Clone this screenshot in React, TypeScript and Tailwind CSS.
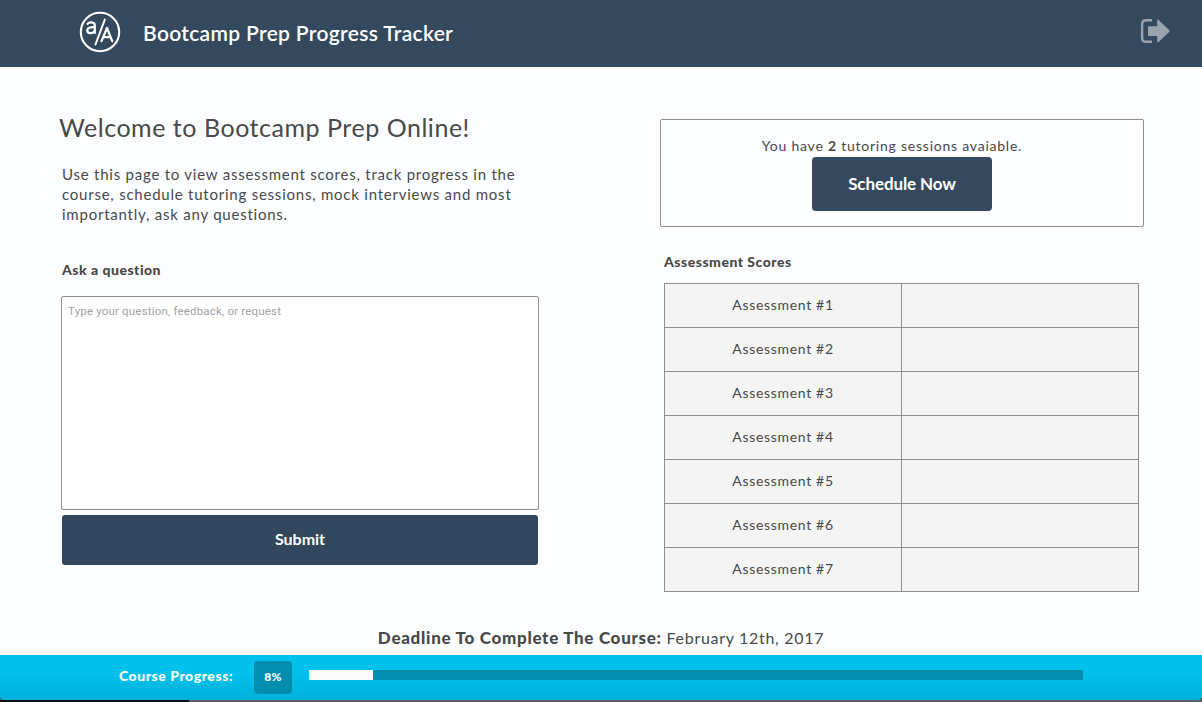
const assessments = [1, 2, 3, 4, 5, 6, 7];
const progress = 8.3;

function Logo() {
  return (
    <svg width="42" height="42" viewBox="0 0 42 42" fill="none" stroke="#fff" strokeLinecap="round" strokeLinejoin="round">
      <circle cx="21" cy="21" r="19.2" strokeWidth="2.1" />
      <path d="M25.8 8.6 L16.4 33.6" strokeWidth="1.9" />
      <path d="M8.6 12.9 C10.2 10.8 15.8 10.4 15.8 14.6 V22 M15.8 16.2 C11 16 8.3 17 8.3 19.4 C8.3 23 14.2 22.9 15.8 19.8" strokeWidth="2.2" />
      <path d="M22.5 30.2 L28 17 L33.2 30.2 M24.5 26.2 H31.4" strokeWidth="2.2" />
    </svg>
  );
}

function SignOutIcon() {
  return (
    <svg width="30" height="26" viewBox="0 0 30 26">
      <path d="M12 2.2 H6 Q2.1 2.2 2.1 6 V20 Q2.1 23.8 6 23.8 H12" fill="none" stroke="#99a4af" strokeWidth="2.4" />
      <path d="M8.8 8.2 H17.2 V2 Q17.6 1 18.6 1.9 L29.4 12.2 Q30 13 29.4 13.8 L18.6 24 Q17.6 24.9 17.2 24 V17.9 H8.8 Q8 17.9 8 17.1 V9 Q8 8.2 8.8 8.2 Z" fill="#99a4af" />
    </svg>
  );
}

export default function App() {
  return (
    <div className="flex h-[702px] w-[1202px] flex-col overflow-hidden bg-[#5a605d] font-['Lato',sans-serif] text-[#494949]">
      <header className="flex h-[67px] shrink-0 items-start border-b border-[#30455b] bg-[#35495e] pr-[32px] pl-[79px]">
        <div className="mt-[11px]"><Logo /></div>
        <h1 className="mt-[18px] ml-[22px] text-[21px] leading-[30px] font-semibold tracking-[0.32px] whitespace-nowrap text-white">
          Bootcamp Prep Progress Tracker
        </h1>
        <button className="mt-[18px] ml-auto" aria-label="Sign out"><SignOutIcon /></button>
      </header>

      <main className="flex h-[558px] shrink-0 justify-between bg-[#fcfdff] pr-[58px] pl-[61px]">
        <section className="w-[478px]">
          <h2 className="mt-[42px] -ml-0.5 text-[25px] leading-9 tracking-[0.53px] whitespace-nowrap">Welcome to Bootcamp Prep Online!</h2>
          <p className="mt-[19px] ml-px text-[15px] leading-5 tracking-[0.77px] whitespace-nowrap">
            Use this page to view assessment scores, track progress in the<br />
            course, schedule tutoring sessions, mock interviews and most<br />
            importantly, ask any questions.
          </p>
          <h3 className="mt-[36px] ml-px text-[14px] leading-5 font-black tracking-[0.5px]">Ask a question</h3>
          <textarea
            className="mt-[16px] block h-[214px] w-[478px] resize-none rounded-[2px] border border-[#8f8f8f] bg-white px-1.5 py-[6px] font-['Roboto',sans-serif] text-[11.5px] leading-4 tracking-[0.18px] placeholder:text-[#a2a2a2]"
            placeholder="Type your question, feedback, or request"
          />
          <button className="mt-[5px] ml-px block h-[50px] w-[476px] rounded-[3px] bg-[#30475e] pb-0.5 text-[16px] font-bold text-white">Submit</button>
        </section>

        <section className="w-[484px]">
          <div className="mt-[52px] flex h-[108px] flex-col items-center rounded-[2px] border border-[#8f8f8f] pt-[16px]">
            <p className="-ml-5 text-[14px] leading-5 tracking-[0.77px] whitespace-nowrap">
              You have <b>2</b> tutoring sessions avaiable.
            </p>
            <button className="mt-px h-[54px] w-[180px] rounded-[4px] bg-[#34495e] text-[17px] font-bold tracking-[-0.1px] text-white">Schedule Now</button>
          </div>
          <h3 className="mt-[25px] ml-1 text-[14px] leading-5 font-black tracking-[0.5px]">Assessment Scores</h3>
          <table className="mt-[11px] ml-1 w-[475px] table-fixed border-collapse bg-[#f4f4f4] text-center text-[14px] tracking-[0.68px]">
            <tbody>
              {assessments.map((n) => (
                <tr key={n} className="h-11">
                  <td className="border border-[#8f8f8f] p-0 pb-0.5">Assessment #{n}</td>
                  <td className="border border-[#8f8f8f] p-0" />
                </tr>
              ))}
            </tbody>
          </table>
        </section>
      </main>

      <p className="h-[30px] shrink-0 bg-[#fcfdff] text-center text-[16px] leading-[26px] tracking-[0.7px] whitespace-nowrap">
        <b className="text-[17px] font-black">Deadline To Complete The Course:</b> February 12th, 2017
      </p>

      <footer className="flex h-[45px] shrink-0 items-start rounded-b-[4px] bg-linear-to-b from-[#00c1ec] from-40% to-[#00b1da] text-white">
        <span className="mt-[11px] ml-[119px] w-[135px] text-[14px] leading-5 font-black tracking-[0.55px] whitespace-nowrap">Course Progress:</span>
        <span className="mt-1.5 flex h-[33px] w-[38px] items-center justify-center rounded-[4px] bg-[#008eb0] pb-px text-[12px] font-black tracking-[0.4px]">8%</span>
        <div className="mt-[15px] ml-[17px] h-[10px] w-[774px] bg-[#008eb0]">
          <div className="h-full bg-[#fcfcfc]" style={{ width: `${progress}%` }} />
        </div>
      </footer>
      <div className="flex h-0.5 shrink-0"><div className="w-[189px] bg-[#06100f]" /></div>
    </div>
  );
}
